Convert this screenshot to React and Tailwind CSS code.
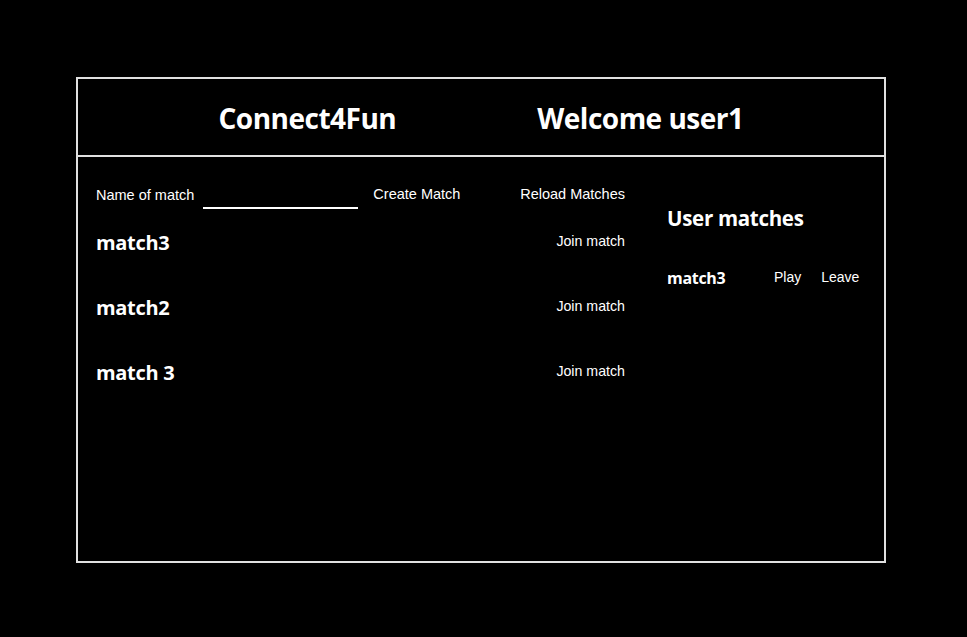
import React, { useState } from "react";

const heading = { fontFamily: '"Open Sans", "Noto Sans", sans-serif' };

export default function App() {
  const [name, setName] = useState("");
  const matches = ["match3", "match2", "match 3"];
  const userMatches = ["match3"];

  return (
    <div className="min-h-screen w-full bg-black pt-[77px] font-['Liberation_Sans',Arial,sans-serif] text-white">
      <div className="mx-auto box-border flex h-[486px] w-[810px] flex-col border-2 border-[#e0e0e0] bg-black ml-[76px]">
        <header className="flex h-[78px] items-center justify-center gap-[141px] border-b-2 border-[#e0e0e0]">
          <h1 style={heading} className="mt-[2px] text-[28px] font-bold leading-none tracking-[-0.5px]">
            Connect4Fun
          </h1>
          <h1 style={heading} className="mt-[2px] text-[28px] font-bold leading-none tracking-[-0.5px]">
            Welcome user1
          </h1>
        </header>

        <main className="flex flex-1 px-[18px]">
          <section className="w-[529px] pt-[23px]">
            <div className="flex h-[30px] items-center">
              <label className="mt-[2px] text-[14.5px]">Name of match</label>
              <input
                type="text"
                value={name}
                onChange={(e) => setName(e.target.value)}
                className="ml-[9px] mt-[10px] h-[18px] w-[155px] border-b-2 border-white bg-transparent text-[13px] text-white outline-none"
              />
              <button className="ml-[15px] text-[14.5px]">Create Match</button>
              <button className="ml-auto text-[14.5px]">Reload Matches</button>
            </div>
            {matches.map((m) => (
              <div key={m} className="flex h-[65px] items-center justify-between">
                <h2 style={heading} className="text-[20px] font-bold leading-none tracking-[-0.3px]">
                  {m}
                </h2>
                <button className="-mt-[2px] text-[14.2px]">Join match</button>
              </div>
            ))}
          </section>

          <section className="ml-[42px] flex-1 pt-[46px]">
            <h2 style={heading} className="flex h-[30px] items-center text-[20.5px] font-bold leading-none tracking-[-0.3px]">
              User matches
            </h2>
            {userMatches.map((m) => (
              <div key={m} className="mt-[30px] flex h-[30px] items-center">
                <h3 style={heading} className="w-[107px] text-[16px] font-bold leading-none tracking-[-0.3px]">
                  {m}
                </h3>
                <button className="-mt-[2px] text-[14px]">Play</button>
                <button className="-mt-[2px] ml-[20px] text-[14px]">Leave</button>
              </div>
            ))}
          </section>
        </main>
      </div>
    </div>
  );
}
